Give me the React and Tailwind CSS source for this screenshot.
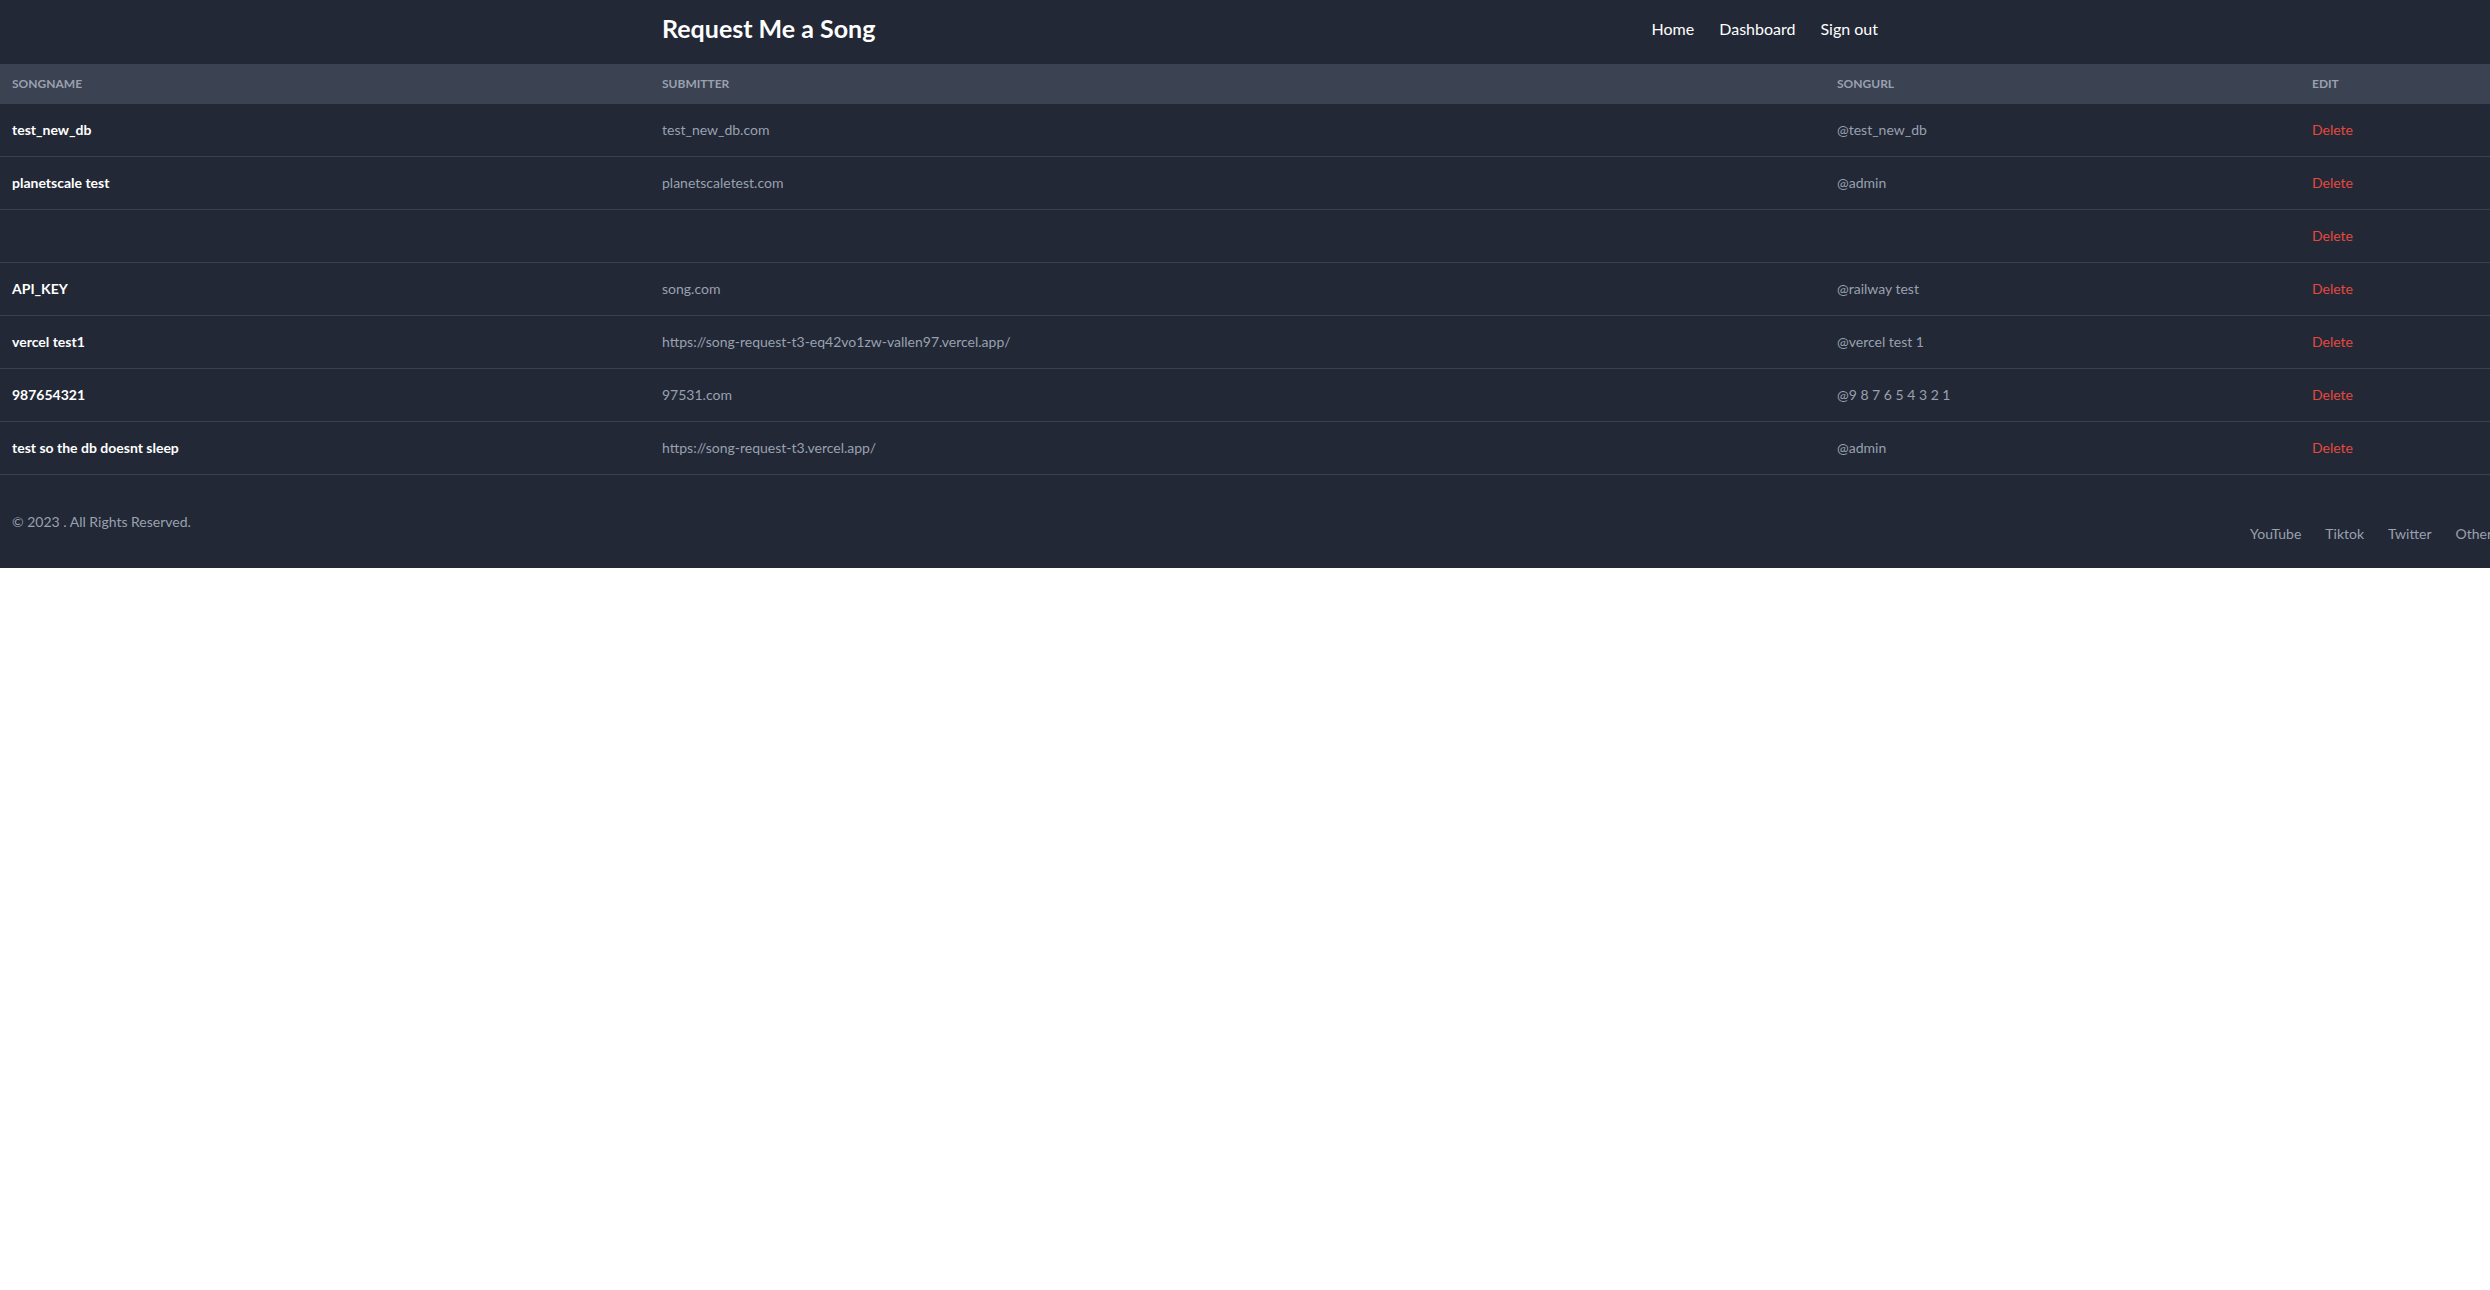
import React from 'react';

const songs = [
  { songName: 'test_new_db', submitter: 'test_new_db.com', songUrl: '@test_new_db' },
  { songName: 'planetscale test', submitter: 'planetscaletest.com', songUrl: '@admin' },
  { songName: '', submitter: '', songUrl: '' },
  { songName: 'API_KEY', submitter: 'song.com', songUrl: '@railway test' },
  { songName: 'vercel test1', submitter: 'https://song-request-t3-eq42vo1zw-vallen97.vercel.app/', songUrl: '@vercel test 1' },
  { songName: '987654321', submitter: '97531.com', songUrl: '@9 8 7 6 5 4 3 2 1' },
  { songName: 'test so the db doesnt sleep', submitter: 'https://song-request-t3.vercel.app/', songUrl: '@admin' },
];

const Navbar = () => {
  return (
    <nav className="bg-[#222836]">
      <div className="mx-auto flex h-16 w-[1248px] items-center justify-between px-4 pb-[7px]">
        <span className="text-[25px] font-bold text-white">Request Me a Song</span>
        <ul className="flex items-center gap-[25px] text-base text-white">
          <li><a href="#">Home</a></li>
          <li><a href="#">Dashboard</a></li>
          <li><a href="#">Sign out</a></li>
        </ul>
      </div>
    </nav>
  );
};

const SongTable = () => {
  return (
    <table className="w-full table-fixed text-left text-sm text-gray-400">
      <colgroup>
        <col className="w-[650px]" />
        <col className="w-[1175px]" />
        <col className="w-[475px]" />
        <col />
      </colgroup>
      <thead className="bg-[#3b4252] text-xs uppercase text-gray-400">
        <tr>
          <th className="px-3 py-3 font-bold">Songname</th>
          <th className="px-3 py-3 font-bold">Submitter</th>
          <th className="px-3 py-3 font-bold">SongURL</th>
          <th className="px-3 py-3 font-bold">Edit</th>
        </tr>
      </thead>
      <tbody>
        {songs.map((song, i) => (
          <tr key={i} className="border-b border-[#3a404d] bg-[#222836]">
            <th className="px-3 py-4 font-bold whitespace-nowrap text-white">{song.songName}</th>
            <td className="px-3 py-4">{song.submitter}</td>
            <td className="px-3 py-4">{song.songUrl}</td>
            <td className="px-3 py-4">
              <a href="#" className="text-[#e5483f]">Delete</a>
            </td>
          </tr>
        ))}
      </tbody>
    </table>
  );
};

const Footer = () => {
  return (
    <footer className="flex h-[93px] items-center justify-between bg-[#222836] pl-3 pr-6">
      <span className="text-sm text-gray-400">© 2023 . All Rights Reserved.</span>
      <ul className="mt-6 flex items-center text-sm text-gray-400">
        <li className="mr-6"><a href="#">YouTube</a></li>
        <li className="mr-6"><a href="#">Tiktok</a></li>
        <li className="mr-6"><a href="#">Twitter</a></li>
        <li className="mr-6"><a href="#">Other</a></li>
      </ul>
    </footer>
  );
};

export default function App() {
  return (
    <div className="w-full overflow-hidden bg-white font-['Segoe_UI',Lato,sans-serif]">
      <div className="w-[2540px]">
        <Navbar />
        <SongTable />
        <Footer />
      </div>
    </div>
  );
}
